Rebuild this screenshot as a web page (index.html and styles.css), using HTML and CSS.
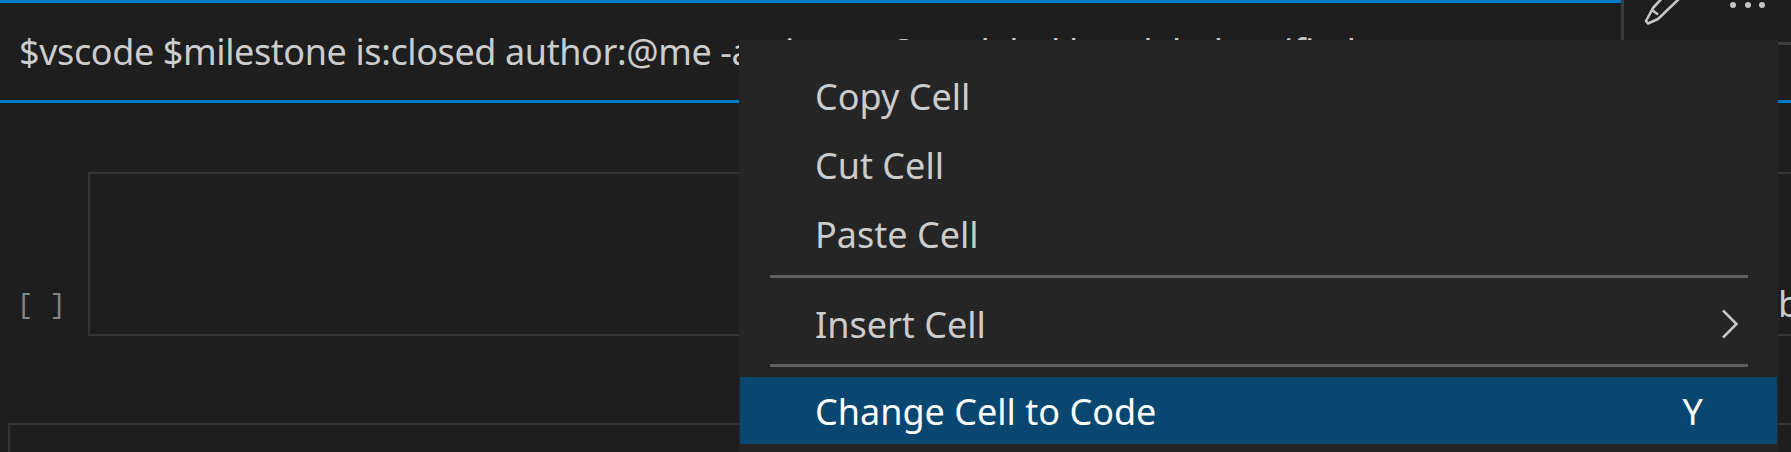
FILE: index.html
```html
<!DOCTYPE html>
<html lang="en">
<head>
  <meta charset="UTF-8" />
  <title>Notebook cell menu</title>
  <link rel="stylesheet" href="styles.css">
</head>

<body>

<div class="page">
  <!-- query cell -->
  <div class="query">$vscode $milestone is:closed author:@me -assignee:@me label:bug label:verified</div>

  <div class="cell-toolbar">
    <svg class="pencil" width="44" height="30" viewBox="0 0 44 30" fill="none" stroke="#c5c5c5" stroke-width="2.6" stroke-linejoin="round">
      <path d="M24 -4 L13 8 L6 21 L8 23.500 L18 19 L41 -3" />
      <path d="M12 10 L18 14.500" />
    </svg>
    <div class="dots"><span></span><span></span><span></span></div>
  </div>

  <!-- result cell -->
  <div class="cell-row">
    <div class="brackets">[ ]</div>
    <div class="cell-box">
      <span class="cell-text">b</span>
    </div>
  </div>
  <div class="cell-box-next"></div>

  <!-- context menu -->
  <div class="menu">
    <div class="menu-item"><span>Copy Cell</span></div>
    <div class="menu-item"><span>Cut Cell</span></div>
    <div class="menu-item"><span>Paste Cell</span></div>
    <div class="menu-sep"></div>
    <div class="menu-item">
      <span>Insert Cell</span>
      <svg class="chevron" width="18" height="30" viewBox="0 0 18 30" fill="none" stroke="#c5c5c5" stroke-width="2.6">
        <path d="M2 1.500 L15.500 15 L2 28.500" />
      </svg>
    </div>
    <div class="menu-sep menu-sep-last"></div>
    <div class="menu-item active"><span>Change Cell to Code</span><span class="key">Y</span></div>
  </div>
</div>

</body>
</html>
```

FILE: styles.css
```css
body {
  margin: 0;
  background: #1e1e1e;
  font-family: "Noto Sans", "Open Sans", sans-serif;
  color: #cccccc;
}

.page {
  position: relative;
  height: 452px;
  overflow: hidden;
}

.query {
  box-sizing: border-box;
  height: 103px;
  padding: 28px 0 0 19px;
  border-bottom: 3px solid #007acc;
  font-size: 36px;
  line-height: 48px;
  letter-spacing: -0.4px;
  white-space: nowrap;
  overflow: hidden;
}

.query::before {
  content: "";
  position: absolute;
  top: 0;
  left: 0;
  width: 1621px;
  height: 3px;
  background: #007acc;
}

.cell-toolbar {
  position: absolute;
  top: 0;
  left: 1621px;
  right: 0;
  height: 42px;
  display: flex;
  border-left: 3px solid #3c3c3c;
  border-bottom: 3px solid #3c3c3c;
  background: #1e1e1e;
}

.pencil {
  margin-left: 16px;
  overflow: visible;
}

.dots {
  display: flex;
  gap: 8.500px;
  margin: 2px 0 0 46px;
}

.dots span {
  width: 6px;
  height: 6px;
  border-radius: 50%;
  background: #c5c5c5;
}

.cell-row {
  display: flex;
  align-items: flex-end;
  height: 164px;
  margin-top: 69px;
}

.brackets {
  width: 88px;
  padding-left: 17px;
  box-sizing: border-box;
  margin-bottom: 12px;
  font-family: "Liberation Mono", monospace;
  font-size: 27px;
  line-height: 36px;
  color: #858585;
}

.cell-box {
  flex: 1;
  box-sizing: border-box;
  height: 164px;
  display: flex;
  justify-content: flex-end;
  align-items: flex-end;
  border: 2px solid #333338;
  border-right: none;
}

.cell-text {
  font-size: 36px;
  line-height: 48px;
  margin-bottom: 6px;
  width: 13px;
  overflow: hidden;
}

.cell-box-next {
  height: 60px;
  margin: 87px 0 0 8px;
  border: 2px solid #333338;
  border-right: none;
  border-bottom: none;
}

.menu {
  position: absolute;
  top: 40px;
  left: 739px;
  width: 1039px;
  height: 412px;
  box-sizing: border-box;
  padding: 21px 1px 0;
  background: #252526;
  display: flex;
  flex-direction: column;
  font-size: 36px;
}

.menu-item {
  display: flex;
  justify-content: space-between;
  align-items: center;
  flex: none;
  height: 69px;
  padding: 1px 29px 0 75px;
  box-sizing: border-box;
}

.menu-item.active {
  height: 67px;
  padding-right: 74px;
  background: #094771;
  color: #ffffff;
}

.menu-sep {
  flex: none;
  height: 3px;
  margin: 7px 29px 11px 30px;
  background: #606060;
}

.menu-sep-last {
  margin: 6px 29px 10px 30px;
}

.chevron {
  margin-right: 9px;
  margin-top: -1px;
}
```
